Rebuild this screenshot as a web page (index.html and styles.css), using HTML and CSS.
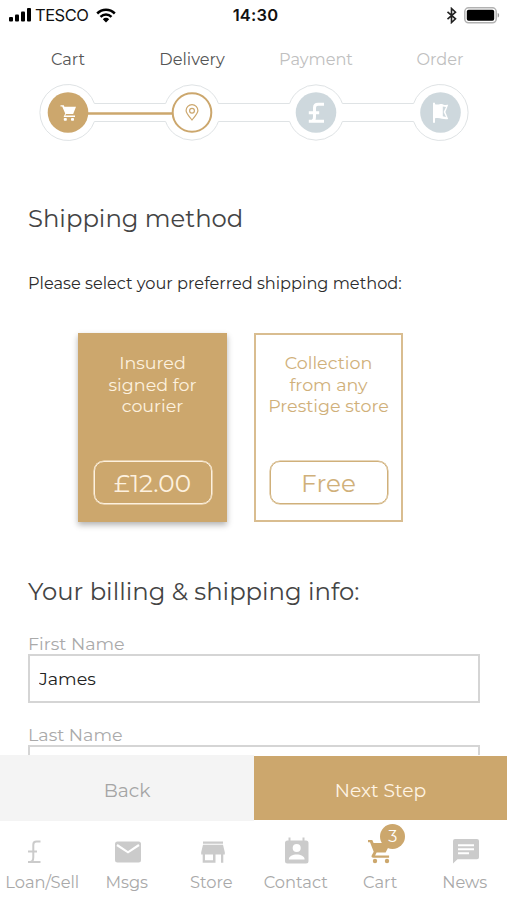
FILE: index.html
```html
<!DOCTYPE html>
<html lang="en">
<head>
<meta charset="utf-8">
<title>Checkout – Delivery</title>
<link rel="stylesheet" href="styles.css">
</head>
<body>
<div class="app">
  <div class="status">
    <div class="status-left">
      <svg width="24" height="16" viewBox="0 0 24 16"><rect x="0" y="10" width="4" height="4.5" rx="1"/><rect x="6" y="7.5" width="4" height="7" rx="1"/><rect x="12" y="4.5" width="4" height="10" rx="1"/><rect x="18" y="1" width="4" height="13.5" rx="1"/></svg>
      <span class="carrier">TESCO</span>
      <svg class="wifi" width="20" height="15" viewBox="0 0 20 15" fill="none" stroke="#000" stroke-width="2.5"><path d="M1.2 5.5C6.2.5 13.8.5 18.8 5.5"/><path d="M4.5 8.9c3.2-3.1 7.8-3.1 11 0"/><path d="M6.8 11.2c1.8-1.8 4.6-1.8 6.4 0L10 14.4z" fill="#000" stroke="none"/></svg>
    </div>
    <span class="time">14:30</span>
    <div class="status-right">
      <svg width="12" height="17" viewBox="0 0 12 17" fill="none" stroke="#222" stroke-width="1.6"><path d="M1.500 4.800l8 7-4 3.700v-14l4 3.700-8 7"/></svg>
      <svg width="36" height="17" viewBox="0 0 36 17"><rect x=".8" y=".8" width="31.4" height="15" rx="3.800" fill="#fff" stroke="#b2b2b2" stroke-width="1.500"/><rect x="2.800" y="2.800" width="27.400" height="11" rx="1.800"/><path d="M33.700 6c1.900.5 1.900 4.100 0 4.600z" fill="#999"/></svg>
    </div>
  </div>

  <div class="stepper">
    <div class="step-labels">
      <span>Cart</span><span>Delivery</span><span class="todo">Payment</span><span class="todo">Order</span>
    </div>
    <svg class="track" width="507" height="60" viewBox="0 0 507 60">
      <path d="M94.400 20.500H165.600A28 28 0 0 1 218.400 20.500H289.600A28 28 0 0 1 342.400 20.500H413.600A28 28 0 1 1 413.600 38.500H342.400A28 28 0 0 1 289.600 38.500H218.400A28 28 0 0 1 165.600 38.500H94.400A28 28 0 1 1 94.400 20.500z" fill="none" stroke="#dfe3e5"/>
      <path d="M86 30.500H174" stroke="#cca76d" stroke-width="2.600"/>
      <circle cx="68" cy="29.500" r="20.300" fill="#cca76d"/>
      <circle cx="192" cy="29.500" r="19.300" fill="#fff" stroke="#cca76d" stroke-width="2"/>
      <circle cx="316" cy="29.500" r="20.300" fill="#ced8dd"/>
      <circle cx="440.500" cy="29.500" r="20.300" fill="#ced8dd"/>
      <g fill="#fff"><path d="M60.500 22.200h3.300l.6 1.500H76l-2.800 7.300h-7.200l-.8 1.400h9.800v1.600H63.600l1.600-3.500-3-7h-1.700z"/><rect x="63.800" y="34.900" width="3" height="2.800" rx=".8"/><rect x="71" y="34.900" width="3" height="2.800" rx=".8"/></g>
      <g fill="none" stroke="#cca76d" stroke-width="1.200"><path d="M192 37c-2.600-3.400-5.900-6.400-5.900-9.400a5.900 5.900 0 0 1 11.800 0c0 3-3.300 6-5.900 9.400z"/><circle cx="192" cy="27.700" r="2.400"/></g>
      <path d="M324 21.300h-6q-3.500 0-3.500 3.500v9q0 4-2.500 4.200M308.800 38.200h15.200M308.800 29.700h10.400" fill="none" stroke="#fff" stroke-width="3"/>
      <path d="M433 19.800h2v1.400c3.800 1.200 5.500-1 8 .2 1.800.8 3.400.6 5.200.4l-2.800 7.200 2.800 7c-5.200 1-8.100-2.100-13.200-.7v4.400h-2zM442.800 23.500v9.800l3.200.8-2.400-5.200 2.400-4.900z" fill="#fff" fill-rule="evenodd"/>
    </svg>
  </div>

  <main class="content">
    <h1>Shipping method</h1>
    <p class="prompt">Please select your preferred shipping method:</p>
    <div class="methods">
      <div class="method selected"><div class="method-name">Insured<br>signed for<br>courier</div><div class="price">£12.00</div></div>
      <div class="method"><div class="method-name">Collection<br>from any<br>Prestige store</div><div class="price">Free</div></div>
    </div>
    <h2>Your billing &amp; shipping info:</h2>
    <div class="field"><label for="first">First Name</label><input id="first" type="text" value="James"></div>
    <div class="field"><label for="last">Last Name</label><input id="last" type="text"></div>
  </main>

  <div class="actions"><button class="back">Back</button><button class="next">Next Step</button></div>

  <nav class="tabs">
    <div class="tab"><svg class="shift" width="30" height="30" viewBox="0 0 30 30"><path d="M21.500 5.500h-4q-3.200 0-3.200 3.200V21q0 5-3.300 5M9 26h12.500M9 15.500h9" fill="none" stroke="#cbcbcb" stroke-width="2"/></svg><span>Loan/Sell</span></div>
    <div class="tab"><svg width="30" height="30" viewBox="0 0 30 30"><rect x="3" y="5.500" width="26" height="21" rx="2.500" fill="#cbcbcb"/><path d="M5 9l11 7.300L27 9" fill="none" stroke="#fff" stroke-width="2.200"/></svg><span>Msgs</span></div>
    <div class="tab"><svg width="30" height="30" viewBox="0 0 30 30" fill="#cbcbcb"><path d="M7 5.500h20v2.300H7zM7 8.700h20l1.800 7.500v2.300h-1.500v8.300H25v-8.300h-5.500v8.300H6.700v-8.300H5.200v-2.300zM9 18.500v5.800h8v-5.800z" fill-rule="evenodd"/></svg><span>Store</span></div>
    <div class="tab"><svg width="30" height="30" viewBox="0 0 30 30"><path d="M7.500 1.500h2v3h12v-3h2v3H25A2.500 2.500 0 0 1 27.500 7v18a2.500 2.500 0 0 1-2.500 2.500H6.500A2.500 2.500 0 0 1 4 25V7a2.500 2.500 0 0 1 2.500-2.500h1z" fill="#cbcbcb"/><circle cx="15.700" cy="12" r="4" fill="#fff"/><path d="M7.800 23.500c0-6.700 15.800-6.700 15.800 0z" fill="#fff"/></svg><span>Contact</span></div>
    <div class="tab"><div class="cart-icon"><svg width="30" height="30" viewBox="0 0 30 30"><path d="M3 4h4.300l1.300 3h17l-5 9.500h-9l-1.500 3h14v2.200H8.300c-1.600 0-2.300-1-1.500-2.500l1.900-3.500L5 6.200H3z" fill="#cca76d"/><circle cx="10" cy="25" r="2.200" fill="#cca76d"/><circle cx="22" cy="25" r="2.200" fill="#cca76d"/></svg><b class="badge">3</b></div><span>Cart</span></div>
    <div class="tab"><svg width="30" height="30" viewBox="0 0 30 30"><path d="M5 3h22A2 2 0 0 1 29 5v16.200a2 2 0 0 1-2 2H7.500L3 27.500V5A2 2 0 0 1 5 3z" fill="#cbcbcb"/><path d="M8 9.300h16M8 13.300h16M8 17.300h11" stroke="#fff" stroke-width="2"/></svg><span>News</span></div>
  </nav>
</div>
</body>
</html>
```

FILE: styles.css
```css
* { box-sizing: border-box; }
body { margin: 0; background: #fff; font-family: Montserrat, Inter, sans-serif; color: #444; }
svg { display: block; flex: none; }
.app { width: 507px; height: 900px; display: grid; grid-template-rows: 30px 120px 1fr 66px 79px; overflow: hidden; }

.status { display: grid; grid-template-columns: 1fr auto 1fr; align-items: center; padding: 0 7px 0 9px; font-family: Inter, sans-serif; color: #111; }
.status-left { display: flex; align-items: center; }
.carrier { font-size: 16.5px; margin-left: 2px; letter-spacing: -.5px; }
.wifi { margin-left: 8px; }
.time { font-size: 16.5px; font-weight: 600; letter-spacing: .2px; padding-left: 2px; }
.status-right { display: flex; justify-content: flex-end; align-items: center; gap: 6px; }

.step-labels { display: grid; grid-template-columns: repeat(4, 124px); padding: 18px 0 0 6px; height: 53px; font-size: 16.2px; line-height: 22px; text-align: center; color: #555; }
.step-labels .todo { color: #c0c0c0; }

.content { padding: 0 27px 0 28px; overflow: hidden; }
h1, h2 { margin: 0; font-weight: 400; font-size: 24.3px; line-height: 32px; }
h1 { padding-top: 52px; }
.prompt { margin: 37px 0 0; font-size: 16.2px; line-height: 24px; color: #2c2c2c; }
.methods { display: flex; gap: 27px; margin: 38px 0 0 50px; }
.method { width: 149px; height: 189px; border: 2px solid #d9bd90; padding: 17px 0 16.500px; display: flex; flex-direction: column; align-items: center; justify-content: space-between; color: #d0b07a; }
.method.selected { background: #cca76d; border-color: #cca76d; color: #fdf1df; box-shadow: 0 3px 6px rgba(0, 0, 0, .3); }
.method-name { font-size: 17.5px; line-height: 21.5px; text-align: center; white-space: nowrap; }
.price { width: 118px; height: 43px; border: 1px solid currentColor; border-radius: 10px; font-size: 24.700px; line-height: 42px; text-align: center; box-shadow: 0 0 0 .5px currentColor; }
h2 { margin-top: 53px; }
.field { margin-top: 25px; height: 65.500px; }
.field label { display: block; font-size: 17.500px; line-height: 22px; padding-top: 1px; margin-bottom: -1px; color: #aaa; }
.field input { display: block; width: 452px; height: 49px; border: 2px solid #d5d5d5; padding: 0 9px; font: 400 17.5px Montserrat, Inter, sans-serif; color: #222; outline: 0; background: #fff; }

.actions { display: grid; grid-template-columns: 254px 253px; }
.actions button { border: 0; padding: 5px 0 0; font: 400 18.700px Montserrat, Inter, sans-serif; }
.back { background: #f4f4f4; color: #a5a5a5; }
.actions .next { background: #cca76d; color: #fff4e4; margin: 1px 0; }

.tabs { display: grid; grid-template-columns: repeat(6, 1fr); }
.tab { display: flex; flex-direction: column; align-items: center; padding-top: 15px; font-size: 16.3px; line-height: 22px; color: #a9a9a9; }
.tab span { margin-top: 5px; white-space: nowrap; }
.shift { margin-right: 16px; }
.cart-icon { position: relative; }
.badge { position: absolute; left: 15px; top: -12px; width: 25px; height: 25px; border-radius: 50%; background: #cca76d; color: #fff; font-weight: 400; font-size: 16px; line-height: 25px; text-align: center; }
```
